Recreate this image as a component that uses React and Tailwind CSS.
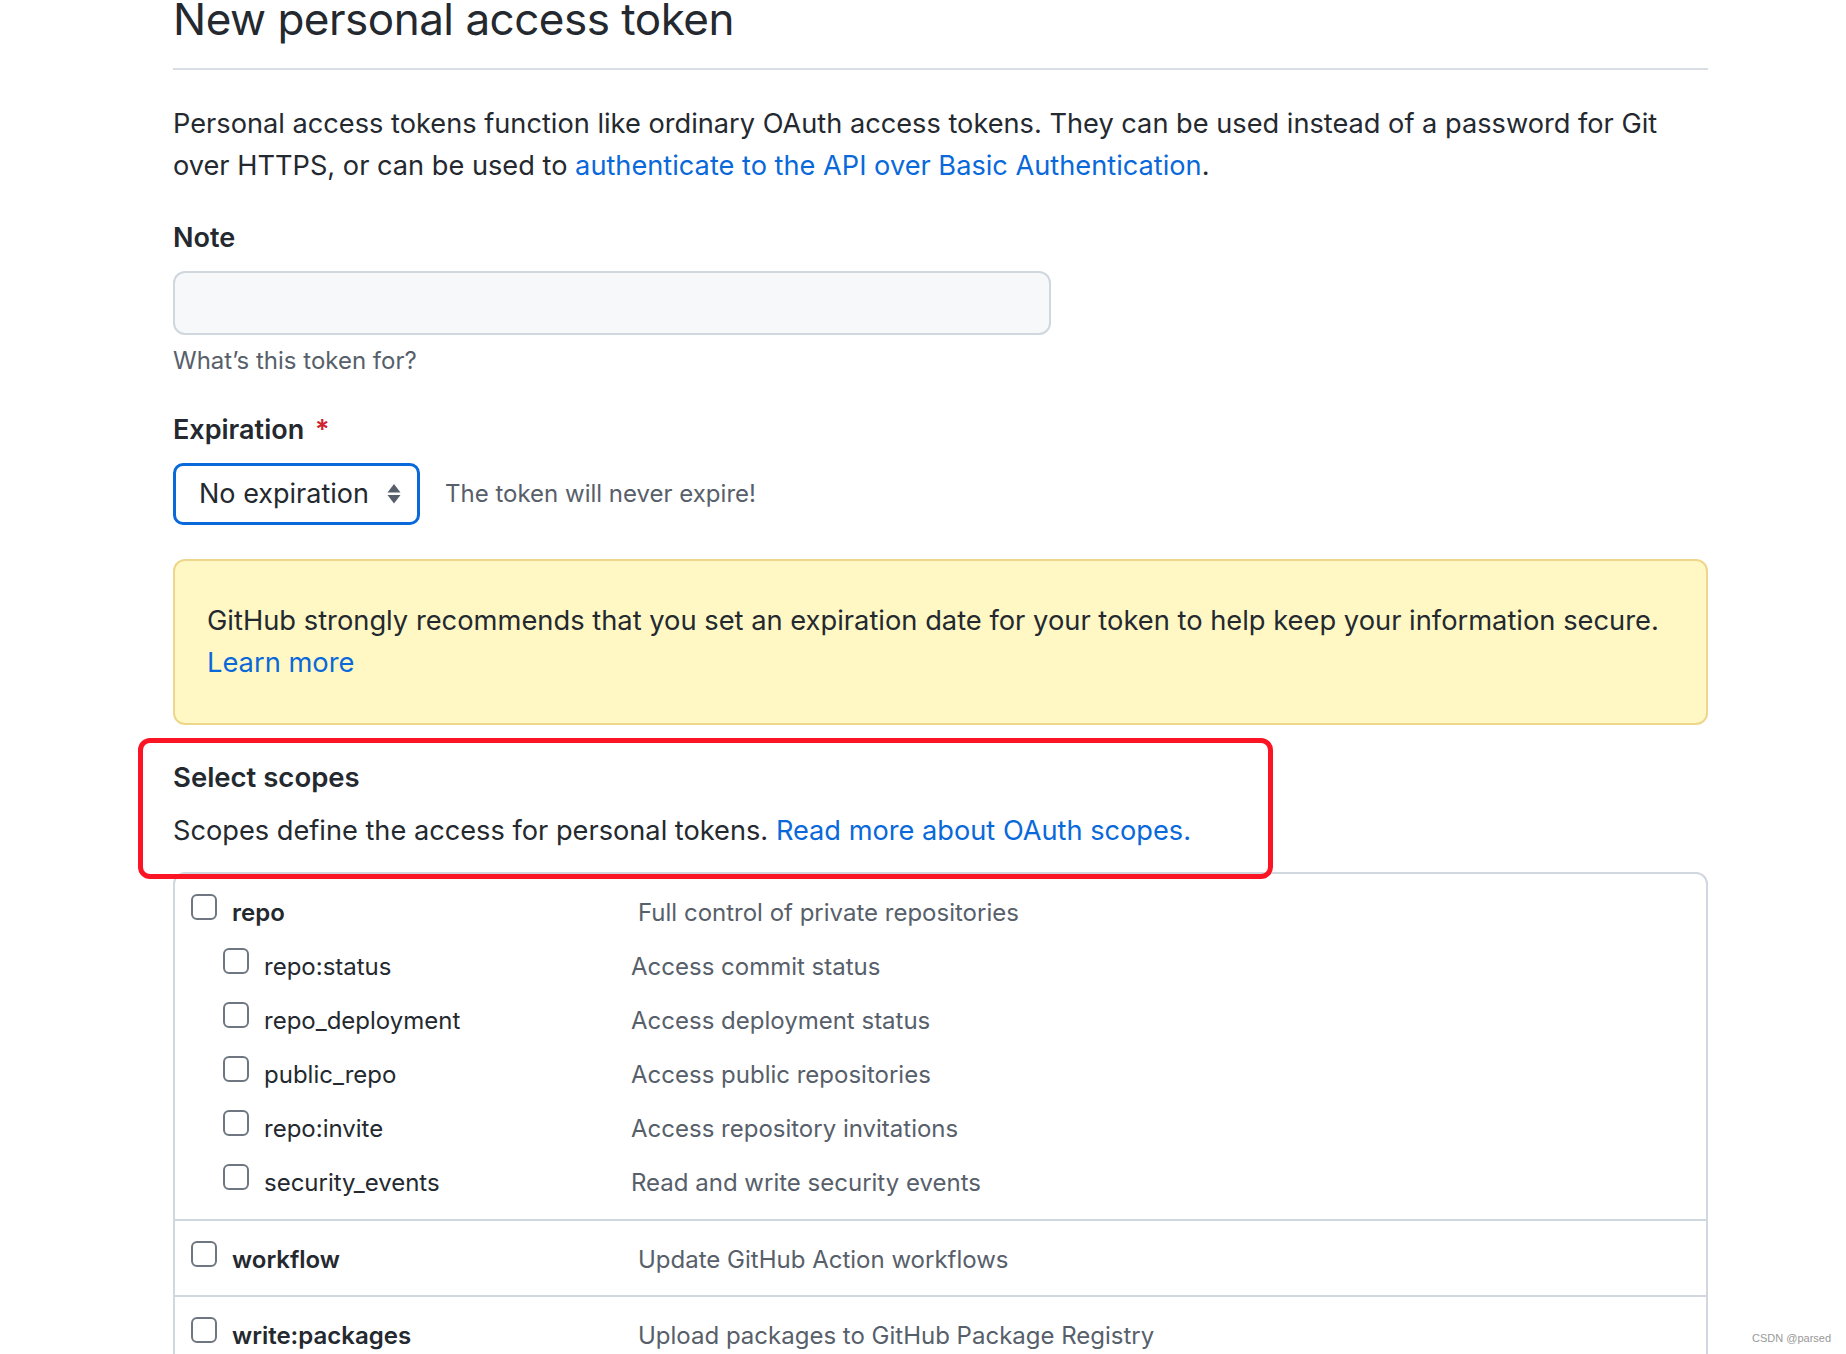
import React from 'react';

const repoChildren = [
  ['repo:status', 'Access commit status'],
  ['repo_deployment', 'Access deployment status'],
  ['public_repo', 'Access public repositories'],
  ['repo:invite', 'Access repository invitations'],
  ['security_events', 'Read and write security events'],
];

const Checkbox = () => (
  <span className="mt-[10px] block w-[26px] h-[26px] shrink-0 rounded-[6px] border-2 border-[#6e7781] bg-white" />
);

const ScopeRow = ({ name, desc, top }) => (
  <div className="flex h-[54px]">
    <div className={top ? 'flex w-[463px] pl-[16px]' : 'flex w-[456px] pl-[48px]'}>
      <Checkbox />
      <span
        className={
          top
            ? 'ml-[15px] pt-[2px] leading-[54px] text-[24px] font-semibold text-[#24292f]'
            : 'ml-[15px] pt-[2px] leading-[54px] text-[24px] text-[#24292f]'
        }
      >
        {name}
      </span>
    </div>
    <span className="pt-[2px] leading-[54px] text-[24px] text-[#57606a]">{desc}</span>
  </div>
);

const App = () => {
  return (
    <div className="relative h-[1354px] overflow-hidden bg-white font-['Inter',sans-serif] text-[#24292f]">
      <div className="ml-[173px] w-[1535px]">
        {/* Header */}
        <div className="border-b-2 border-[#d8dee4] pb-[30px]">
          <h1 className="text-[44px] leading-[38px] font-normal tracking-[-0.5px]">
            New personal access token
          </h1>
        </div>

        <p className="mt-[33px] text-[27.2px] leading-[42px]">
          Personal access tokens function like ordinary OAuth access tokens. They can be used instead of a password for Git
          <br />
          over HTTPS, or can be used to{' '}
          <a className="text-[#0969da]">authenticate to the API over Basic Authentication</a>.
        </p>

        {/* Note */}
        <div className="mt-[30px]">
          <label className="block text-[27px] leading-[42px] font-semibold">Note</label>
          <div className="mt-[12px] h-[64px] w-[878px] rounded-[12px] border-2 border-[#d0d7de] bg-[#f6f8fa]" />
          <p className="mt-[8px] text-[24px] leading-[36px] text-[#57606a]">What’s this token for?</p>
        </div>

        {/* Expiration */}
        <div className="mt-[30px]">
          <label className="block text-[27px] leading-[42px] font-semibold">
            Expiration <span className="ml-[4px] text-[#cf222e]">*</span>
          </label>
          <div className="mt-[12px] flex items-center">
            <div className="flex h-[62px] w-[247px] items-center rounded-[10px] border-[3px] border-[#0969da] bg-white pl-[23px]">
              <span className="text-[27px] leading-[42px]">No expiration</span>
              <svg className="ml-[18px]" width="14" height="20" viewBox="0 0 14 20">
                <path d="M7 0 L13.5 8.5 H0.5 Z" fill="#57606a" />
                <path d="M0.5 11 H13.5 L7 19.5 Z" fill="#57606a" />
              </svg>
            </div>
            <span className="ml-[25px] text-[24px] leading-[36px] text-[#57606a]">The token will never expire!</span>
          </div>
        </div>

        {/* Warning flash */}
        <div className="mt-[34px] rounded-[12px] border-2 border-[#eed68a] bg-[#fff8c5] px-[32px] py-[39px] text-[27.3px] leading-[42px]">
          GitHub strongly recommends that you set an expiration date for your token to help keep your information secure.
          <br />
          <a className="text-[#0969da]">Learn more</a>
        </div>

        {/* Scopes */}
        <h3 className="mt-[31px] text-[27.5px] leading-[42px] font-semibold">Select scopes</h3>
        <p className="mt-[12px] text-[27.2px] leading-[42px]">
          Scopes define the access for personal tokens.{' '}
          <a className="text-[#0969da]">Read more about OAuth scopes.</a>
        </p>

        <div className="mt-[20px] rounded-t-[12px] border-2 border-[#d0d7de]">
          <div className="pt-[10px] pb-[11px]">
            <ScopeRow top name="repo" desc="Full control of private repositories" />
            {repoChildren.map(([name, desc]) => (
              <ScopeRow key={name} name={name} desc={desc} />
            ))}
          </div>
          <div className="border-t-2 border-[#d0d7de] py-[10px]">
            <ScopeRow top name="workflow" desc="Update GitHub Action workflows" />
          </div>
          <div className="border-t-2 border-[#d0d7de] py-[10px]">
            <ScopeRow top name="write:packages" desc="Upload packages to GitHub Package Registry" />
          </div>
        </div>
      </div>

      {/* red annotation */}
      <div className="absolute left-[138px] top-[738px] h-[141px] w-[1135px] rounded-[12px] border-[5px] border-[#fb1524]" />

      <span className="absolute left-[1752px] top-[1331px] text-[11px] leading-[14px] text-[#999999] font-['Liberation_Sans',sans-serif]">
        CSDN @parsed
      </span>
    </div>
  );
};

export default App;
